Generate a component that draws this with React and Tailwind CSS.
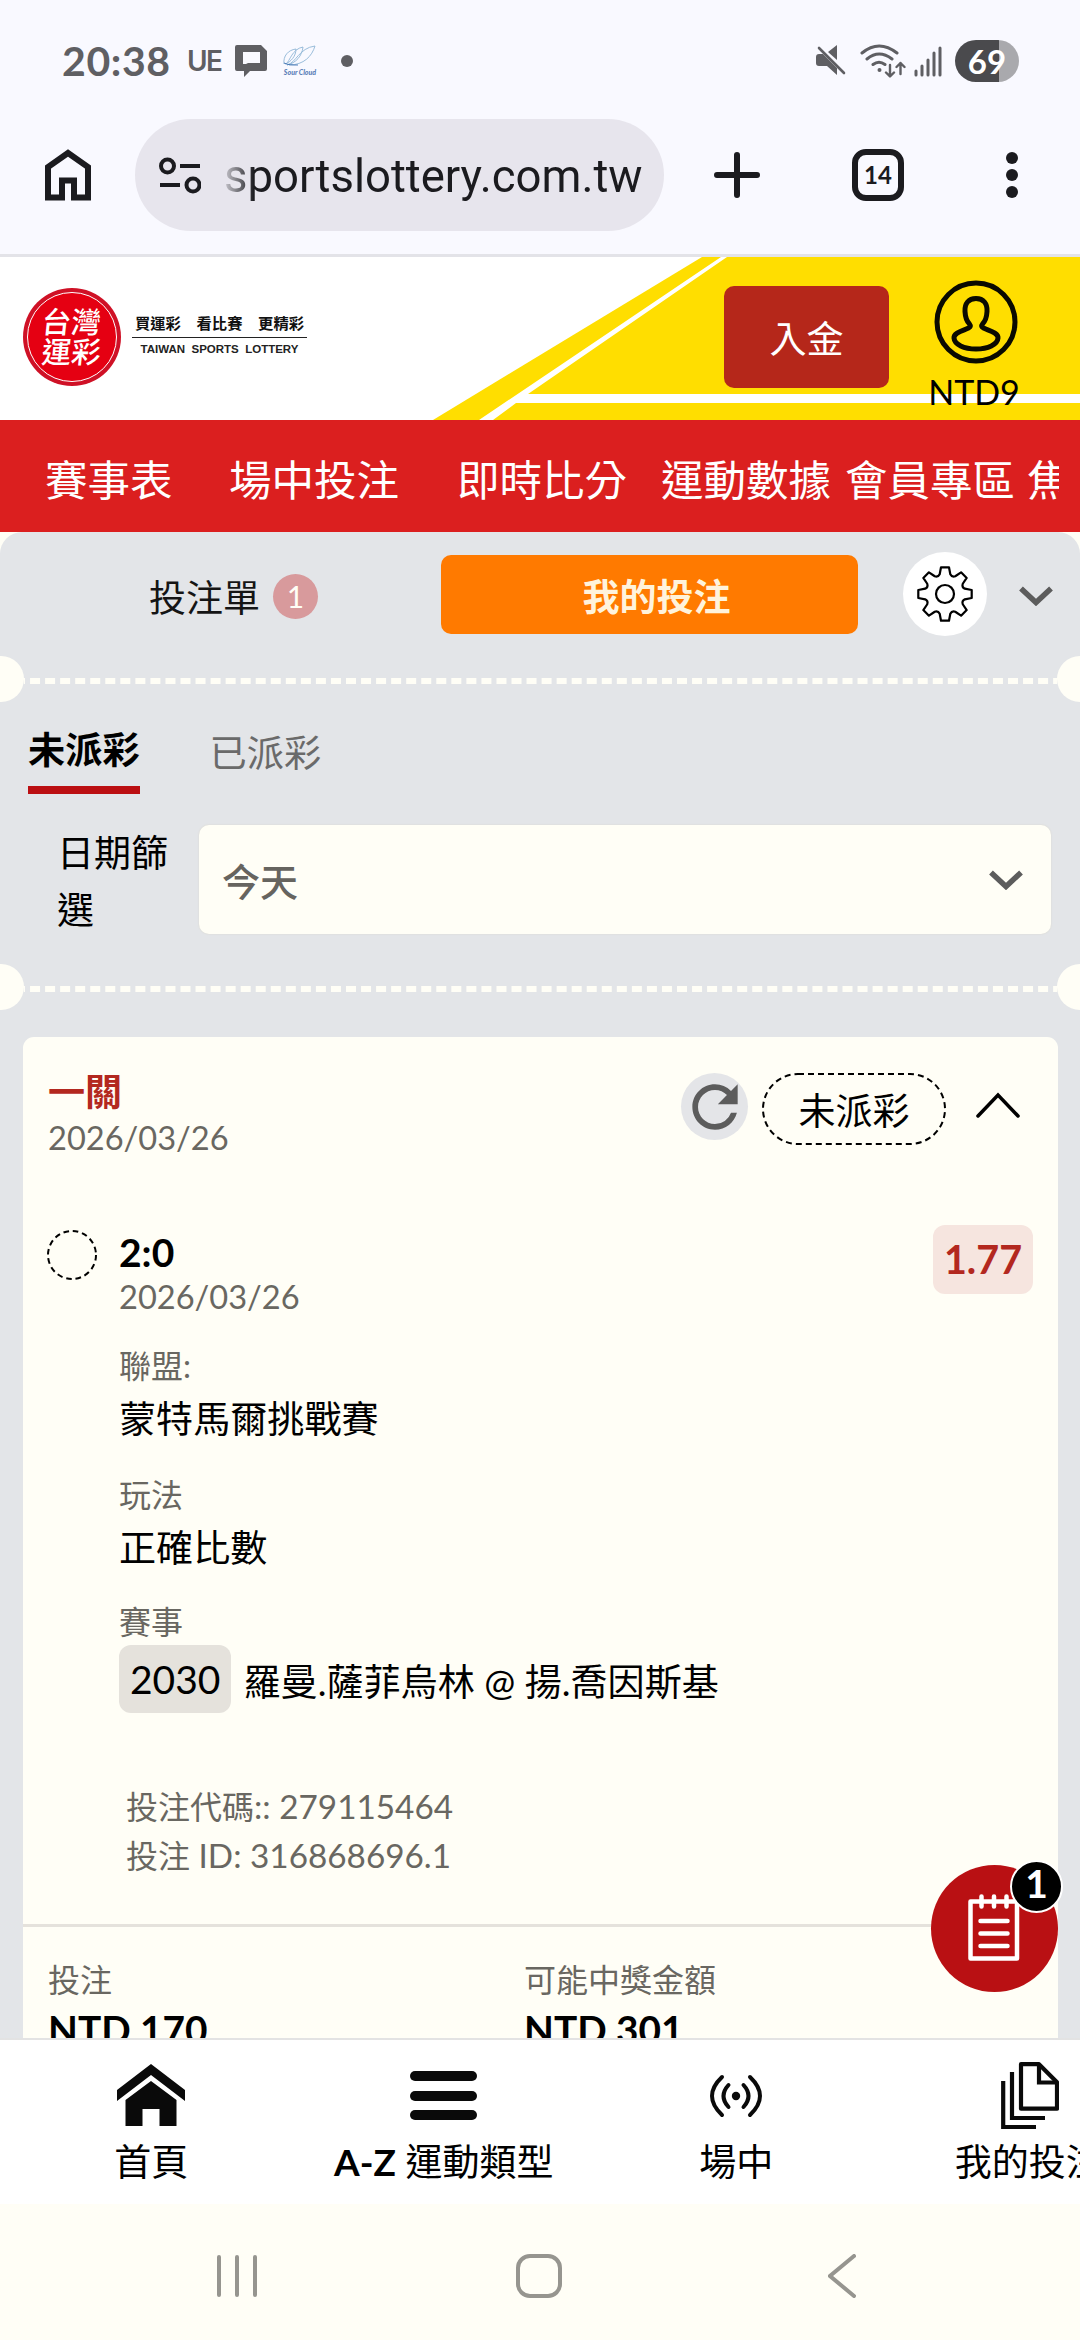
import React from "react";
import { MdRefresh } from "react-icons/md";

const navLinks = [
  { label: "賽事表", width: "w-[184px]" },
  { label: "場中投注", width: "w-[228px]" },
  { label: "即時比分", width: "w-[204px]" },
  { label: "運動數據", width: "w-[184px]" },
  { label: "會員專區", width: "w-[182px]" },
  { label: "焦", width: "w-[42px]" },
];

const bet = {
  title: "一關",
  date: "2026/03/26",
  status: "未派彩",
  pick: "2:0",
  odds: "1.77",
  league: "蒙特馬爾挑戰賽",
  market: "正確比數",
  eventNo: "2030",
  event: "羅曼.薩菲烏林 @ 揚.喬因斯基",
  code: "279115464",
  id: "316868696.1",
  stake: "NTD 170",
  payout: "NTD 301",
};

// Outline of an eight-toothed gear centred on 28,28
const gearPoint = (r, deg) => {
  const a = (deg * Math.PI) / 180;
  return `${(28 + r * Math.cos(a)).toFixed(2)} ${(28 + r * Math.sin(a)).toFixed(2)}`;
};

const gearPath =
  Array.from({ length: 8 }, (_, i) => {
    const t = i * 45;
    return `${i === 0 ? "M" : "L"}${gearPoint(20.5, t - 15)}L${gearPoint(27, t - 8.5)}L${gearPoint(27, t + 8.5)}L${gearPoint(20.5, t + 15)}Q${gearPoint(18, t + 22.5)} ${gearPoint(20.5, t + 30)}`;
  }).join("") + "z";

function StatusBar() {
  return (
    <div className="flex h-[119px] items-center justify-between pl-[62px] pr-[61px] pt-[3px] text-[#5f5f63]">
      <div className="flex items-center">
        <span className="w-[125px] text-[41px] leading-[44px] font-bold tracking-[0.6px]">20:38</span>
        <span className="w-[48px] font-['Inter'] text-[28px] leading-[44px] font-semibold tracking-[-1.5px]">UE</span>
        <svg className="h-[34px] w-[33px]" viewBox="0 0 33 34">
          <path fill="#5f5f63" fillRule="evenodd" d="M2 1h24l6 6v18a2 2 0 0 1-2 2H15l-6 6v-6H2a2 2 0 0 1-2-2V3a2 2 0 0 1 2-2zM8 8v12h3l2-1h12V8z" />
        </svg>
        <div className="ml-[14px] flex w-[36px] flex-col items-center">
          <svg className="h-[22px] w-[34px]" viewBox="0 0 34 22" fill="none" stroke="#8fb5d6" strokeWidth="0.9">
            <path d="M1 19C0 11 5 5 13 4c0 7-5 13-11 15M3 19C7 16 9 4 20 2c-1 9-7 16-16 18M4 20C13 18 16 3 32 1c-3 10-11 19-26 19" />
            <path d="M1 18c4 2 8 2 14 2" stroke="#3d6fb0" />
          </svg>
          <span className="text-[7px] leading-[10px] font-black whitespace-nowrap text-[#5b7fb8] italic">Sour Cloud</span>
        </div>
        <span className="ml-[23px] h-[12px] w-[12px] rounded-full bg-[#5f5f63]" />
      </div>
      <div className="flex items-center">
        <svg className="h-[32px] w-[31px]" viewBox="0 0 31 32">
          <path fill="#5f5f63" d="M0 12q0-3 3-3h4l14 14v7l-10-9H3q-3 0-3-3zM12 7l9-7v15z" />
          <path stroke="#5f5f63" strokeWidth="2.6" strokeLinecap="round" d="M3 3l25 25" />
        </svg>
        <svg className="ml-[13px] h-[36px] w-[46px]" viewBox="0 0 46 36" fill="none" stroke="#5f5f63" strokeLinecap="round" strokeLinejoin="round">
          <path strokeWidth="3" d="M2 10Q19-4 37 10M7 16Q19 6 32 16M13 21.500Q19 17 25 21.500" />
          <circle cx="19.500" cy="27" r="2" fill="#5f5f63" stroke="none" />
          <path strokeWidth="2.400" d="M30 22v11M26 29.500l4 4 4-4M40.500 31V20M36.500 24l4-4 4 4" />
        </svg>
        <svg className="ml-[8px] h-[32px] w-[28px]" viewBox="0 0 28 32" stroke="#5f5f63" strokeWidth="3" strokeLinecap="round">
          <path d="M2 26v4M8 21v9M14 15v15M20 8v22M26 3v27" />
        </svg>
        <div className="ml-[13px] flex h-[42px] w-[64px] items-center justify-center rounded-full bg-linear-to-r from-[#4a4a4d] from-[68%] to-[#a9a9ad] to-[68%] pb-[1px] text-[33px] leading-[42px] font-bold text-white">
          69
        </div>
      </div>
    </div>
  );
}

function BrowserBar() {
  return (
    <div className="flex h-[138px] items-start border-b-[3px] border-[#e3e3e8]">
      <div className="flex h-[112px] w-[135px] items-center pl-[45px]">
        <svg className="h-[52px] w-[46px]" viewBox="0 0 46 52" fill="none" stroke="#1b1b1f" strokeWidth="6">
          <path d="M3 48.500V18L23 4l20 14v30.500H29V31.500H17v17z" />
        </svg>
      </div>
      <div className="flex h-[112px] w-[529px] items-center rounded-full bg-[#e7e5ed] pl-[24px]">
        <svg className="h-[37px] w-[42px]" viewBox="0 0 42 37" fill="none" stroke="#1b1b1f" strokeWidth="4">
          <circle cx="8.500" cy="9" r="6.500" />
          <circle cx="34" cy="28" r="6.500" />
          <path d="M21 9h20M1 28h20" />
        </svg>
        <div className="ml-[23px] w-[430px] overflow-hidden bg-linear-to-r from-[#1b1b1f]/15 to-[#1b1b1f] to-[7%] bg-clip-text pt-[4px] font-['Roboto'] text-[45.500px] leading-[60px] whitespace-nowrap text-transparent">
          sportslottery.com.tw
        </div>
      </div>
      <div className="flex h-[112px] flex-1 items-center">
        <svg className="ml-[50px] h-[46px] w-[46px]" viewBox="0 0 46 46" stroke="#1b1b1f" strokeWidth="6" strokeLinecap="round">
          <path d="M23 3v40M3 23h40" />
        </svg>
        <div className="ml-[92px] flex h-[52px] w-[52px] items-center justify-center rounded-[14px] border-[6px] border-[#1b1b1f] text-[24px] leading-none font-bold text-[#1b1b1f]">
          14
        </div>
        <div className="ml-[102px] flex flex-col gap-[5px]">
          <span className="h-[12px] w-[12px] rounded-full bg-[#1b1b1f]" />
          <span className="h-[12px] w-[12px] rounded-full bg-[#1b1b1f]" />
          <span className="h-[12px] w-[12px] rounded-full bg-[#1b1b1f]" />
        </div>
      </div>
    </div>
  );
}

function SiteHeader() {
  return (
    <div className="relative h-[163px] bg-white">
      {/* Court line artwork */}
      <svg className="absolute inset-0 h-full w-full" viewBox="0 0 1080 163">
        <path fill="#ffde00" d="M433 163L702 0h378v163z" />
        <path fill="#fff" d="M479 163L721 0h6L528 137h552v9H516l-23 17z" />
      </svg>
      <div className="relative flex h-full items-start">
        <div className="mt-[31px] ml-[23px] flex h-[98px] w-[98px] items-center justify-center rounded-full bg-[#cf1126] p-[4px]">
          <div className="flex h-full w-full flex-col items-center justify-center rounded-full border-[1.500px] border-white bg-[#e50012] text-[29.500px] leading-[30px] font-medium text-white">
            <span className="-skew-x-6">台灣</span>
            <span className="-skew-x-6">運彩</span>
          </div>
        </div>
        <div className="mt-[55px] ml-[11px] w-[175px]">
          <div className="flex justify-between pr-[3px] pl-[3px] text-[15.300px] leading-[22px] font-bold text-[#111]">
            <span>買運彩</span>
            <span>看比賽</span>
            <span>更精彩</span>
          </div>
          <div className="mt-[3px] h-px bg-[#222]" />
          <div className="mt-[4px] text-center font-['Liberation_Sans'] text-[11.500px] leading-[14px] font-bold whitespace-pre text-[#222]">
            TAIWAN  SPORTS  LOTTERY
          </div>
        </div>
        <button className="mt-[29px] ml-[417px] h-[102px] w-[165px] rounded-[10px] bg-[#b5271a] pt-[3px] text-[37px] text-white">入金</button>
        <div className="mt-[23px] ml-[40px] flex w-[90px] flex-col items-center">
          <svg className="ml-[3px] h-[84px] w-[84px]" viewBox="0 0 84 84" fill="none" stroke="#0a0a00" strokeWidth="5">
            <circle cx="42" cy="42" r="39" />
            <path strokeLinejoin="round" d="M42 18.500c-7.500 0-11.500 5-11 13 .3 6 1.500 9.500 4.500 12.500 1.500 1.800 1 3-1 4-5 2.500-15 4.500-14.500 10C20.500 64.500 30 69 42 69s21.500-4.500 22-11c.5-5.500-9.500-7.500-14.500-10-2-1-2.500-2.200-1-4 3-3 4.200-6.500 4.500-12.500.5-8-3.500-13-11-13z" />
          </svg>
          <span className="mt-[6px] text-[34px] leading-[44px] text-black">NTD9</span>
        </div>
      </div>
    </div>
  );
}

function SiteNav() {
  return (
    <div className="h-[112px] bg-[#db1f1f] pt-[4px] pr-[21px] pl-[45px] text-[42.500px] leading-[112px] text-white">
      <div className="flex overflow-hidden whitespace-nowrap">
        {navLinks.map((link) => (
          <span key={link.label} className={`shrink-0 ${link.width}`}>
            {link.label}
          </span>
        ))}
      </div>
    </div>
  );
}

function ChevronDown() {
  return (
    <svg className="h-[20px] w-[34px]" viewBox="0 0 34 20" fill="none" stroke="#5c5c5c" strokeWidth="5.500">
      <path d="M2 2.500L17 16.500 32 2.500" />
    </svg>
  );
}

// Ticket tear line with a notch on both sides
function TearLine() {
  return (
    <div className="flex h-[46px] items-center justify-between overflow-hidden">
      <div className="-ml-[22px] h-[46px] w-[46px] shrink-0 rounded-full bg-[#fffef6]" />
      <svg className="mt-[4px] h-[6px] flex-1" viewBox="0 0 1034 6" preserveAspectRatio="none">
        <path d="M-9 3h1050" stroke="#fffef6" strokeWidth="6" strokeDasharray="10 5.060" />
      </svg>
      <div className="-mr-[23px] h-[46px] w-[46px] shrink-0 rounded-full bg-[#fffef6]" />
    </div>
  );
}

function SlipTabs() {
  return (
    <div className="flex h-[124px] items-start pt-[20px]">
      <div className="flex h-[88px] w-[441px] items-center pl-[149px] text-[37px] text-[#151515]">
        <span className="pt-[3px]">投注單</span>
        <span className="ml-[13px] flex h-[45px] w-[45px] items-center justify-center rounded-full bg-[#d89a9c] text-[30px] leading-none text-[#fffef6]">
          1
        </span>
      </div>
      <button className="mt-[3px] h-[79px] w-[417px] rounded-[10px] bg-[#ff7a00] pt-[4px] pl-[14px] text-[37px] font-bold text-[#fff3dc]">我的投注</button>
      <div className="ml-[45px] flex h-[84px] w-[84px] items-center justify-center rounded-full bg-white">
        <svg className="h-[56px] w-[56px]" viewBox="0 0 56 56" fill="none" stroke="#000" strokeWidth="2.200" strokeLinejoin="round">
          <path d={gearPath} />
          <circle cx="28" cy="28" r="9" />
        </svg>
      </div>
      <div className="mt-[34px] ml-[32px]">
        <ChevronDown />
      </div>
    </div>
  );
}

function Filters() {
  return (
    <div className="h-[262px] pt-[20px] pl-[28px]">
      <div className="flex text-[37.200px] leading-[55px]">
        <div className="h-[72px] border-b-[8px] border-[#bb0f12] font-bold text-black">未派彩</div>
        <div className="ml-[70px] pt-[3px] text-[#6a6a6a]">已派彩</div>
      </div>
      <div className="mt-[30px] flex items-start">
        <div className="w-[171px] pr-[25px] pl-[29px] text-[37px] leading-[57px] text-black">日期篩選</div>
        <div className="mt-[1px] flex h-[109px] w-[852px] items-center justify-between rounded-[10px] bg-[#fffef6] pr-[28px] pl-[23px] shadow-[0_0_2px_#d9d6cc]">
          <span className="pt-[4px] text-[38px] font-medium text-[#66645f]">今天</span>
          <ChevronDown />
        </div>
      </div>
    </div>
  );
}

function BetCard() {
  return (
    <div className="mx-[23px] mt-[27px] h-[1020px] w-[1035px] rounded-[11px] bg-[#fffef6] pt-[33px] text-[37.100px] text-black">
      {/* Card header */}
      <div className="flex h-[160px] items-start pl-[25px]">
        <div className="w-[633px]">
          <div className="leading-[44px] font-bold text-[#b3281f]">{bet.title}</div>
          <div className="mt-[2px] text-[32.600px] leading-[44px] text-[#696761]">{bet.date}</div>
        </div>
        <div className="mt-[3px] flex h-[67px] w-[67px] items-center justify-center rounded-full bg-[#e4e5e8]">
          <MdRefresh className="h-[68px] w-[68px] shrink-0 text-[#5c5c5c]" />
        </div>
        <svg className="mt-[3px] ml-[14px] h-[72px] w-[184px]" viewBox="0 0 184 72">
          <rect x="1" y="1" width="182" height="70" rx="35" fill="none" stroke="#000" strokeWidth="2" strokeDasharray="6 4" />
          <text x="92" y="52" textAnchor="middle" fontSize="37" fill="#000">{bet.status}</text>
        </svg>
        <svg className="mt-[22px] ml-[30px] h-[28px] w-[44px]" viewBox="0 0 44 28" fill="none" stroke="#000" strokeWidth="3.500" strokeLinecap="round">
          <path d="M2 24L22 3l20 21" />
        </svg>
      </div>

      {/* Selection */}
      <div className="flex items-start pl-[24px]">
        <svg className="h-[50px] w-[50px]" viewBox="0 0 50 50">
          <circle cx="25" cy="25" r="24" fill="none" stroke="#000" strokeWidth="2" strokeDasharray="5.600 3.830" />
        </svg>
        <div className="ml-[22px] w-[814px]">
          <div className="text-[39px] leading-[45px] font-bold">{bet.pick}</div>
          <div className="text-[32.600px] leading-[44px] text-[#696761]">{bet.date}</div>
          <div className="mt-[25px] text-[32px] leading-[44px] text-[#696761]">聯盟:</div>
          <div className="mt-[3px] leading-[56px]">{bet.league}</div>
          <div className="mt-[26px] text-[32px] leading-[44px] text-[#696761]">玩法</div>
          <div className="mt-[3px] leading-[56px]">{bet.market}</div>
          <div className="mt-[24px] text-[32px] leading-[44px] text-[#696761]">賽事</div>
          <div className="mt-[1px] flex items-center">
            <span className="h-[68px] rounded-[12px] bg-[#e5e2dc] px-[11px] text-[39px] leading-[69px]">{bet.eventNo}</span>
            <span className="ml-[12px] pt-[5px]">{bet.event}</span>
          </div>
          <div className="mt-[69px] pl-[7px] text-[33.300px] leading-[49px] text-[#696761]">
            <div>
              <span className="text-[32px]">投注代碼</span>:: {bet.code}
            </div>
            <div>
              <span className="text-[32px]">投注</span> ID: {bet.id}
            </div>
          </div>
        </div>
        <div className="-mt-[5px] h-[69px] w-[100px] rounded-[12px] bg-[#f6e5df] text-center text-[39.500px] leading-[68px] font-bold text-[#b3281f]">
          {bet.odds}
        </div>
      </div>

      {/* Totals */}
      <div className="mt-[44px] flex border-t-[3px] border-[#e5e2dc] pt-[31px] pl-[25px]">
        <div className="w-[476px]">
          <div className="text-[32px] leading-[44px] text-[#696761]">投注</div>
          <div className="mt-[3px] text-[38.800px] leading-[48px] font-bold">{bet.stake}</div>
        </div>
        <div>
          <div className="text-[32px] leading-[44px] text-[#696761]">可能中獎金額</div>
          <div className="mt-[3px] text-[38.800px] leading-[48px] font-bold">{bet.payout}</div>
        </div>
      </div>
    </div>
  );
}

function SlipButton() {
  return (
    <button className="absolute top-[1865px] left-[931px] flex h-[127px] w-[127px] rounded-full bg-[#b91013]">
      <svg className="mt-[28px] ml-[37px] h-[70px] w-[52px]" viewBox="0 0 52 70" fill="none" stroke="#fff" strokeWidth="4.500" strokeLinecap="round" strokeLinejoin="round">
        <path d="M2.500 8.500h46.500v57H2.500zM13.500 3.500v10M26 3.500v10M38.500 3.500v10M12.500 28h27M12.500 40.500h27M12.500 53h27" />
      </svg>
      <span className="absolute -top-[5px] left-[79px] h-[53px] w-[53px] rounded-full border-2 border-white bg-black text-center text-[39px] leading-[42px] font-bold text-white">
        1
      </span>
    </button>
  );
}

function BottomNav() {
  return (
    <div className="h-[166px] overflow-hidden border-t-2 border-[#e3e3e3] bg-white text-[37px] text-black">
      <div className="ml-[5px] flex w-[1170px]">
        <div className="flex w-[292.500px] flex-col items-center pt-[24px]">
          <svg className="h-[62px] w-[68px]" viewBox="0 0 68 62" fill="#0a0a0a">
            <path d="M34 0l34 26v11L34 11 0 37V26z" />
            <path d="M34 17l25.500 19v26h-17V45h-17v17h-17V36z" />
          </svg>
          <span className="mt-[8px] leading-[56px]">首頁</span>
        </div>
        <div className="flex w-[292.500px] flex-col items-center pt-[31px]">
          <div className="flex flex-col gap-[9.500px]">
            <span className="h-[10px] w-[67px] rounded-full bg-[#0a0a0a]" />
            <span className="h-[10px] w-[67px] rounded-full bg-[#0a0a0a]" />
            <span className="h-[10px] w-[67px] rounded-full bg-[#0a0a0a]" />
          </div>
          <span className="mt-[14px] leading-[56px] whitespace-nowrap">
            <b>A-Z</b> 運動類型
          </span>
        </div>
        <div className="flex w-[292.500px] flex-col items-center pt-[34px]">
          <svg className="h-[44px] w-[52px]" viewBox="0 0 52 44" fill="none" stroke="#0a0a0a" strokeWidth="4" strokeLinecap="round">
            <path d="M12 3Q-8 22 12 41M40 3Q60 22 40 41M18.500 11Q8.500 22 18.500 33M33.500 11Q43.500 22 33.500 33" />
            <circle cx="26" cy="22" r="4.200" fill="#0a0a0a" stroke="none" />
          </svg>
          <span className="mt-[16px] leading-[56px]">場中</span>
        </div>
        <div className="flex w-[292.500px] flex-col items-center pt-[22px]">
          <svg className="ml-[3px] h-[67px] w-[58px]" viewBox="0 0 58 67" fill="none" stroke="#0a0a0a" strokeWidth="4.200">
            <path strokeLinejoin="round" d="M20 2.200h18l18 18v26.500H20z" />
            <path d="M38 2v18.500h18M11 10v46h33M2.200 19v46H35" />
          </svg>
          <span className="mt-[5px] leading-[56px]">我的投注</span>
        </div>
      </div>
    </div>
  );
}

function SystemNav() {
  return (
    <div className="flex h-[136px] items-start bg-[#fffef6] pt-[50px] pl-[217px]">
      <svg className="h-[44px] w-[40px]" viewBox="0 0 40 44" stroke="#96958f" strokeWidth="4" strokeLinecap="round">
        <path d="M2 3v38M20 3v38M38 3v38" />
      </svg>
      <div className="ml-[259px] h-[44px] w-[46px] rounded-[14px] border-4 border-[#96958f]" />
      <svg className="ml-[266px] h-[44px] w-[28px]" viewBox="0 0 28 44" fill="none" stroke="#96958f" strokeWidth="4" strokeLinecap="round">
        <path d="M26 2L2 22l24 20" />
      </svg>
    </div>
  );
}

export default function App() {
  return (
    <div lang="zh-Hant" className="relative flex h-[2340px] w-[1080px] flex-col overflow-hidden bg-[#f9f9ff] font-['Lato','Noto_Sans_CJK_TC',sans-serif]">
      <StatusBar />
      <BrowserBar />
      <SiteHeader />
      <SiteNav />
      {/* Bet slip panel */}
      <div className="h-[1506px] overflow-hidden bg-[#fffef6]">
        <div className="h-full rounded-t-[22px] bg-[#e3e5e8]">
          <SlipTabs />
          <TearLine />
          <Filters />
          <TearLine />
          <BetCard />
        </div>
      </div>
      <BottomNav />
      <SystemNav />
      <SlipButton />
    </div>
  );
}
